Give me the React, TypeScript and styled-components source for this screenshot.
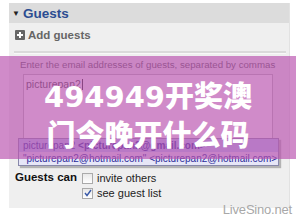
import styled, { createGlobalStyle } from 'styled-components';

const GlobalStyle = createGlobalStyle`
  html, body {
    margin: 0;
    padding: 0;
    background: #ffffff;
  }
  body {
    font-family: "Liberation Sans", Arial, sans-serif;
  }
`;

const Page = styled.div`
  position: relative;
  width: 296px;
  height: 220px;
  overflow: hidden;
  background: #fff;
  padding-top: 3px;
  box-sizing: border-box;
`;

const Panel = styled.div`
  margin-left: 9px;
  width: 280px;
  height: 205px;
  background: #efefef;
  border-right: 1px solid #e2e2e2;
  position: relative;
`;

const Header = styled.div`
  height: 20px;
  background: #dcdcdc;
  display: flex;
  align-items: center;
  padding-left: 3px;
  gap: 3px;
  color: #2b4c91;
  font-weight: bold;
  font-size: 13.5px;
`;

const Arrow = styled.span`
  font-size: 8px;
  color: #222;
`;

const AddRow = styled.div`
  display: flex;
  align-items: center;
  gap: 3px;
  padding: 6px 0 0 6px;
  height: 12px;
  color: #666;
  font-weight: bold;
  font-size: 11.5px;
`;

const PlusBox = styled.span`
  width: 10px;
  height: 10px;
  background: #666;
  border-radius: 1px;
  display: flex;
  align-items: center;
  justify-content: center;
`;

const Divider = styled.div`
  margin: 10px 3px 0 5px;
  height: 2px;
  background: #dadada;
  border-bottom: 1px solid #f8f8f8;
`;

const Hint = styled.div`
  padding: 5px 0 0 11px;
  font-size: 9.7px;
  color: #555;
  white-space: nowrap;
`;

const TextBox = styled.div`
  margin: 4px 0 0 14px;
  width: 250px;
  height: 66px;
  background: #fff;
  border: 1px solid #b8b8b8;
  padding: 3px 0 0 2px;
  font-size: 10.5px;
  color: #444;
  box-sizing: border-box;
`;

const Caret = styled.span`
  display: inline-block;
  width: 1px;
  height: 11px;
  background: #222;
  vertical-align: -2px;
  margin-left: 1px;
`;

const Dropdown = styled.div`
  position: absolute;
  left: 9px;
  top: 135px;
  width: 259px;
  background: #fff;
  border: 1px solid #8888aa;
  box-shadow: 2px 2px 1px rgba(0, 0, 0, 0.25);
  font-size: 10px;
  color: #2a2a9a;
`;

const Option = styled.div<{ $selected?: boolean }>`
  height: 13px;
  line-height: 13px;
  padding-left: 4px;
  white-space: nowrap;
  overflow: hidden;
  background: ${(p) => (p.$selected ? '#b9c6f4' : '#e6e6f7')};
  b {
    font-weight: bold;
  }
`;

const CanRow = styled.div`
  display: flex;
  padding: 9px 0 0 6px;
  margin-top: 22px;
`;

const CanLabel = styled.div`
  width: 67px;
  font-weight: bold;
  font-size: 11.5px;
  color: #111;
  line-height: 13px;
`;

const Checks = styled.div`
  display: flex;
  flex-direction: column;
  gap: 1px;
`;

const CheckRow = styled.label`
  display: flex;
  align-items: center;
  gap: 4px;
  height: 14px;
  font-size: 11px;
  color: #222;
`;

const Box = styled.span`
  width: 9px;
  height: 9px;
  border: 1px solid #aaa;
  background: linear-gradient(#e8e8e8, #fff);
  display: flex;
  align-items: center;
  justify-content: center;
`;

const Overlay = styled.div`
  position: absolute;
  left: 0;
  top: 56px;
  width: 296px;
  height: 103px;
  background: rgba(186, 84, 176, 0.68);
  display: flex;
  flex-direction: column;
  align-items: center;
  justify-content: center;
  padding-top: 12px;
  box-sizing: border-box;
`;

const BigLine = styled.div`
  color: #fff;
  font-family: "Noto Sans CJK SC", "Noto Sans", sans-serif;
  font-weight: 900;
  font-size: 29px;
  line-height: 36px;
  white-space: nowrap;
`;

const Digits = styled.span`
  font-family: "DejaVu Sans", sans-serif;
  font-weight: bold;
`;

const Watermark = styled.div`
  position: absolute;
  right: 4px;
  bottom: 3px;
  font-size: 13px;
  color: #a8a8a8;
  letter-spacing: -0.2px;
`;

export default function App() {
  return (
    <>
      <GlobalStyle />
      <Page>
        <Panel>
          <Header>
            <Arrow>▼</Arrow>
            Guests
          </Header>
          <AddRow>
            <PlusBox>
              <svg width="8" height="8" viewBox="0 0 8 8">
                <path d="M4 1v6M1 4h6" stroke="#fff" strokeWidth="2" />
              </svg>
            </PlusBox>
            Add guests
          </AddRow>
          <Divider />
          <Hint>Enter the email addresses of guests, separated by commas</Hint>
          <TextBox>
            picturepan2
            <Caret />
          </TextBox>
          <Dropdown>
            <Option $selected>
              picturepan2 <b>&lt;picturepan2@gmail.com&gt;</b>
            </Option>
            <Option>"picturepan2@hotmail.com" &lt;picturepan2@hotmail.com&gt;</Option>
          </Dropdown>
          <CanRow>
            <CanLabel>Guests can</CanLabel>
            <Checks>
              <CheckRow>
                <Box />
                invite others
              </CheckRow>
              <CheckRow>
                <Box>
                  <svg width="8" height="8" viewBox="0 0 8 8">
                    <path d="M1 4l2 2.5L7 1" stroke="#3a5aa8" strokeWidth="1.4" fill="none" />
                  </svg>
                </Box>
                see guest list
              </CheckRow>
            </Checks>
          </CanRow>
        </Panel>
        <Overlay>
          <BigLine>
            <Digits>494949</Digits>开奖澳
          </BigLine>
          <BigLine>门今晚开什么码</BigLine>
        </Overlay>
        <Watermark>LiveSino.net</Watermark>
      </Page>
    </>
  );
}
